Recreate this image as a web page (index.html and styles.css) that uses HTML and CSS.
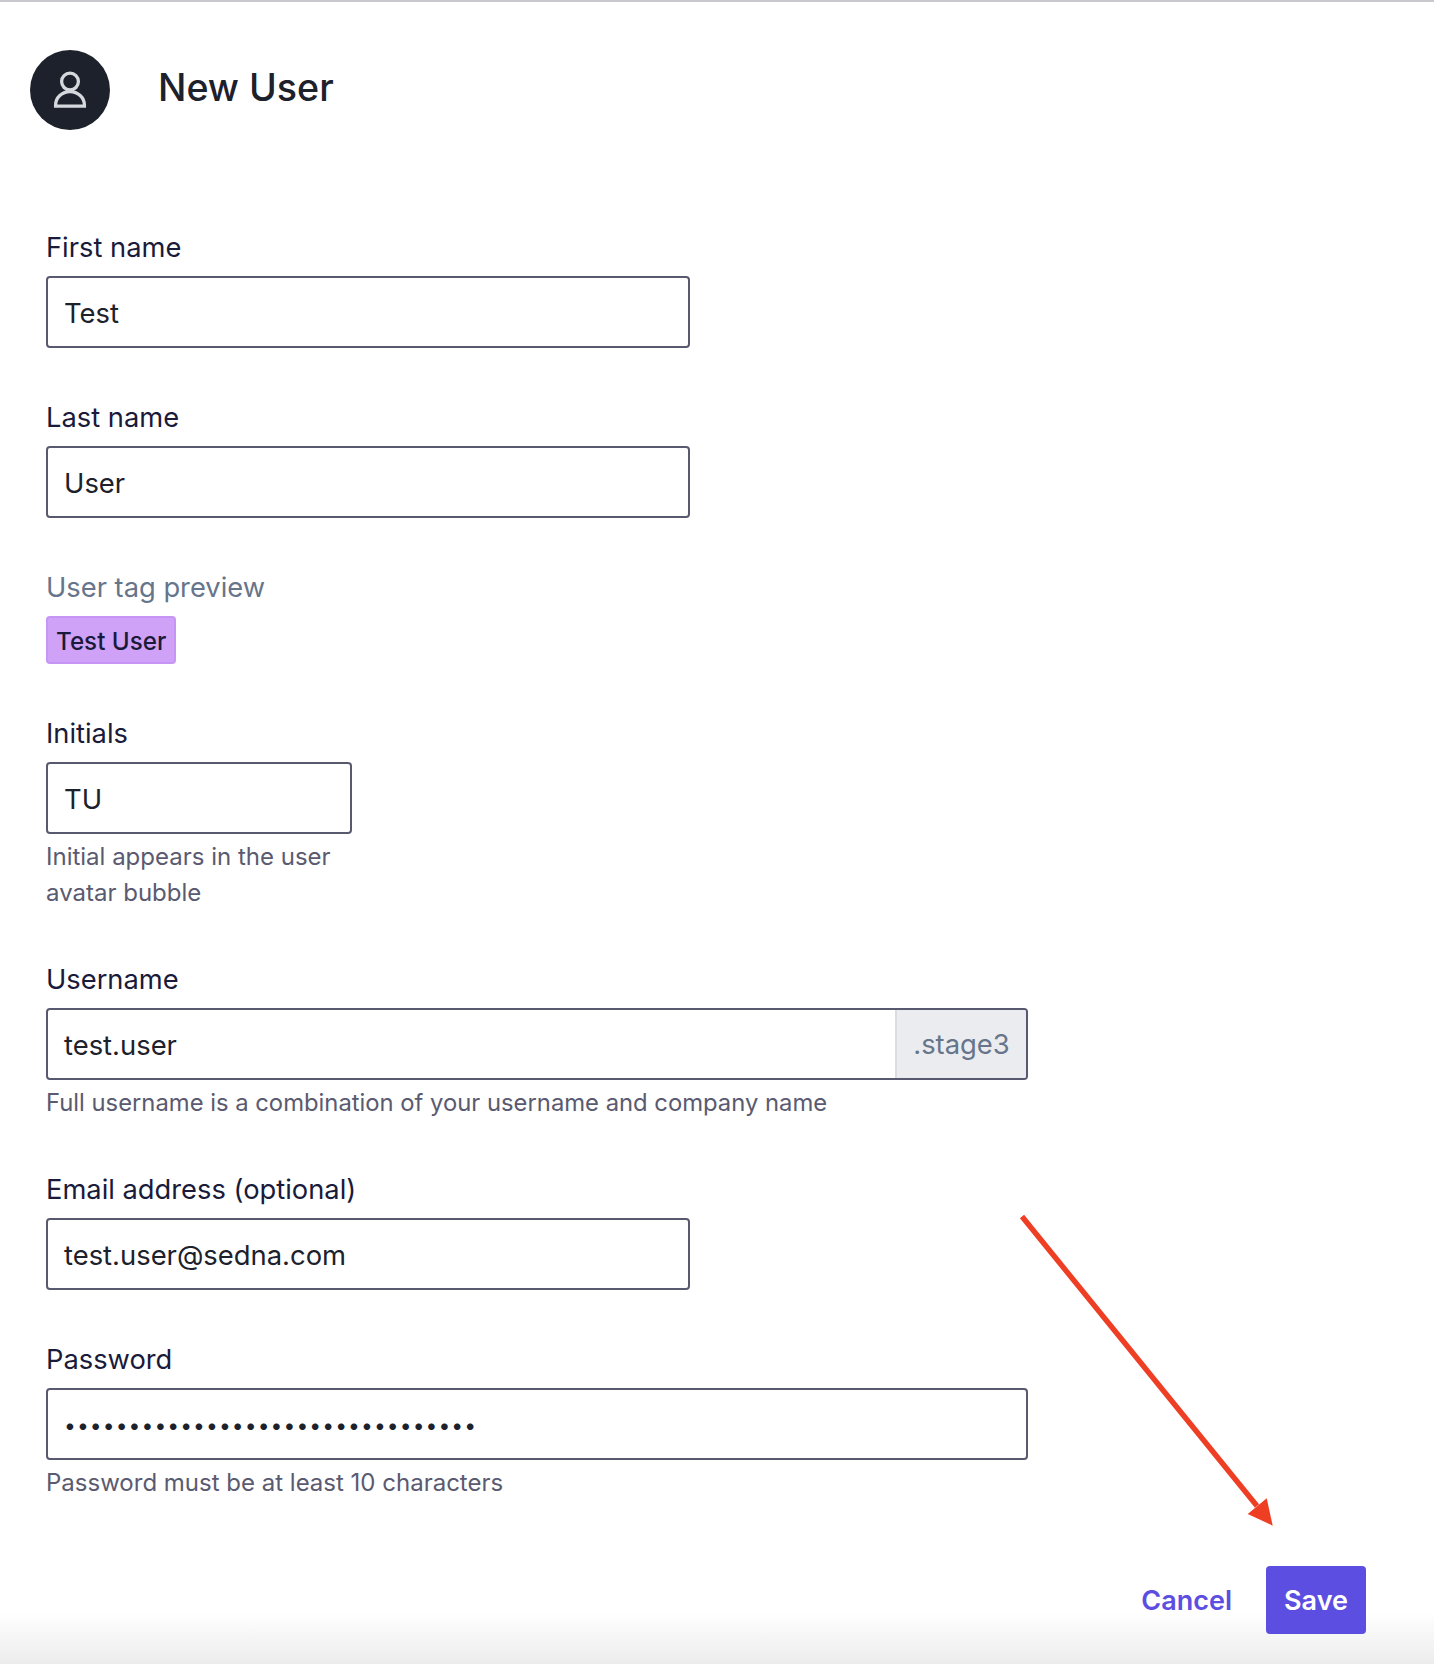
FILE: index.html
```html
<!DOCTYPE html>
<html lang="en">
<head>
<meta charset="utf-8">
<title>New User</title>
<link rel="stylesheet" href="styles.css">
</head>
<body>
<main class="page">
  <header class="header">
    <div class="avatar">
      <svg width="36" height="38" viewBox="0 0 36 38" fill="none" stroke="#d5d9de" stroke-width="3.3">
        <circle cx="18" cy="10.6" r="8.4"/>
        <path d="M3.6 35.1v-1a14.4 13.5 0 0 1 28.8 0v1z"/>
      </svg>
    </div>
    <h1 class="title">New User</h1>
  </header>
  <form class="form">
    <div class="field">
      <label class="label">First name</label>
      <div class="input medium">Test</div>
    </div>
    <div class="field">
      <label class="label">Last name</label>
      <div class="input medium">User</div>
    </div>
    <div class="field">
      <span class="label muted">User tag preview</span>
      <span class="tag">Test User</span>
    </div>
    <div class="field">
      <label class="label">Initials</label>
      <div class="input small">TU</div>
      <p class="help narrow">Initial appears in the user avatar bubble</p>
    </div>
    <div class="field">
      <label class="label">Username</label>
      <div class="input large group">
        <span class="group-value">test.user</span>
        <span class="addon">.stage3</span>
      </div>
      <p class="help tight">Full username is a combination of your username and company name</p>
    </div>
    <div class="field">
      <label class="label">Email address (optional)</label>
      <div class="input medium">test.user@sedna.com</div>
    </div>
    <div class="field">
      <label class="label">Password</label>
      <div class="input large dots">••••••••••••••••••••••••••••••••</div>
      <p class="help">Password must be at least 10 characters</p>
    </div>
  </form>
  <footer class="footer">
    <a class="cancel">Cancel</a>
    <button class="save" type="button">Save</button>
  </footer>
  <svg class="arrow" width="280" height="340" viewBox="0 0 280 340">
    <line x1="3" y1="3.5" x2="238" y2="293" stroke="#ee3f24" stroke-width="5.4"/>
    <polygon points="253.7,312.7 228.7,301 247.7,285.3" fill="#ee3f24"/>
  </svg>
</main>
</body>
</html>
```
FILE: styles.css
```css
* { box-sizing: border-box; }
html, body { margin: 0; padding: 0; }
body {
  background: #fff;
  font-family: Inter, "Liberation Sans", sans-serif;
  color: #1c212b;
}
.page {
  position: relative;
  height: 1664px;
  border-top: 2px solid #c9c9cd;
  background: linear-gradient(to bottom, #fff 0, #fff 1610px, #ececec 1662px);
  overflow: hidden;
}
.header {
  display: flex;
  align-items: flex-start;
  padding: 48px 0 0 30px;
  height: 226px;
}
.avatar {
  width: 80px;
  height: 80px;
  border-radius: 50%;
  background: #1c212b;
  display: flex;
  align-items: center;
  justify-content: center;
}
.title {
  margin: 16px 0 0 48px;
  font-size: 37.6px;
  line-height: 44px;
  font-weight: 500;
}
.form {
  display: flex;
  flex-direction: column;
  padding-left: 46px;
}
.field {
  display: flex;
  flex-direction: column;
  align-items: flex-start;
  margin-bottom: 50px;
}
.label {
  font-size: 27.3px;
  line-height: 40px;
  color: #1a1a3a;
  margin-bottom: 8px;
}
.muted { color: #66758a; }
.input {
  height: 72px;
  border: 2px solid #58586e;
  border-radius: 4px;
  padding: 1px 16px 0;
  display: flex;
  align-items: center;
  font-size: 27.4px;
  color: #1c212b;
  background: #fff;
}
.medium { width: 644px; }
.small { width: 306px; }
.large { width: 982px; }
.group { padding: 0; overflow: hidden; }
.group-value { flex: 1; padding: 1px 16px 0; }
.addon {
  width: 131px;
  height: 100%;
  padding: 0 16px;
  display: flex;
  align-items: center;
  justify-content: center;
  background: #ebecf0;
  border-left: 2px solid #dcdde2;
  color: #66758a;
}
.dots { font-size: 21px; letter-spacing: 1.1px; padding-top: 3px; }
.tag {
  height: 48px;
  padding: 2px 8px 0;
  display: flex;
  align-items: center;
  background: #cfa2f8;
  border: 2px solid #c695f5;
  border-radius: 4px;
  font-size: 24.2px;
  font-weight: 500;
  color: #1a1a3a;
}
.help {
  margin: 5px 0 -1px;
  font-size: 24px;
  line-height: 36px;
  color: #5a5a70;
}
.tight { font-size: 23.8px; }
.narrow { width: 310px; }
.footer {
  position: absolute;
  right: 68px;
  top: 1564px;
  display: flex;
  align-items: center;
  gap: 34px;
}
.cancel { font-size: 27px; font-weight: 600; color: #5b4ee0; }
.save {
  width: 100px;
  height: 68px;
  border: 0;
  border-radius: 4px;
  background: #5b4ee0;
  color: #fff;
  font: 600 27px Inter, "Liberation Sans", sans-serif;
}
.arrow { position: absolute; left: 1019px; top: 1211px; }
```
